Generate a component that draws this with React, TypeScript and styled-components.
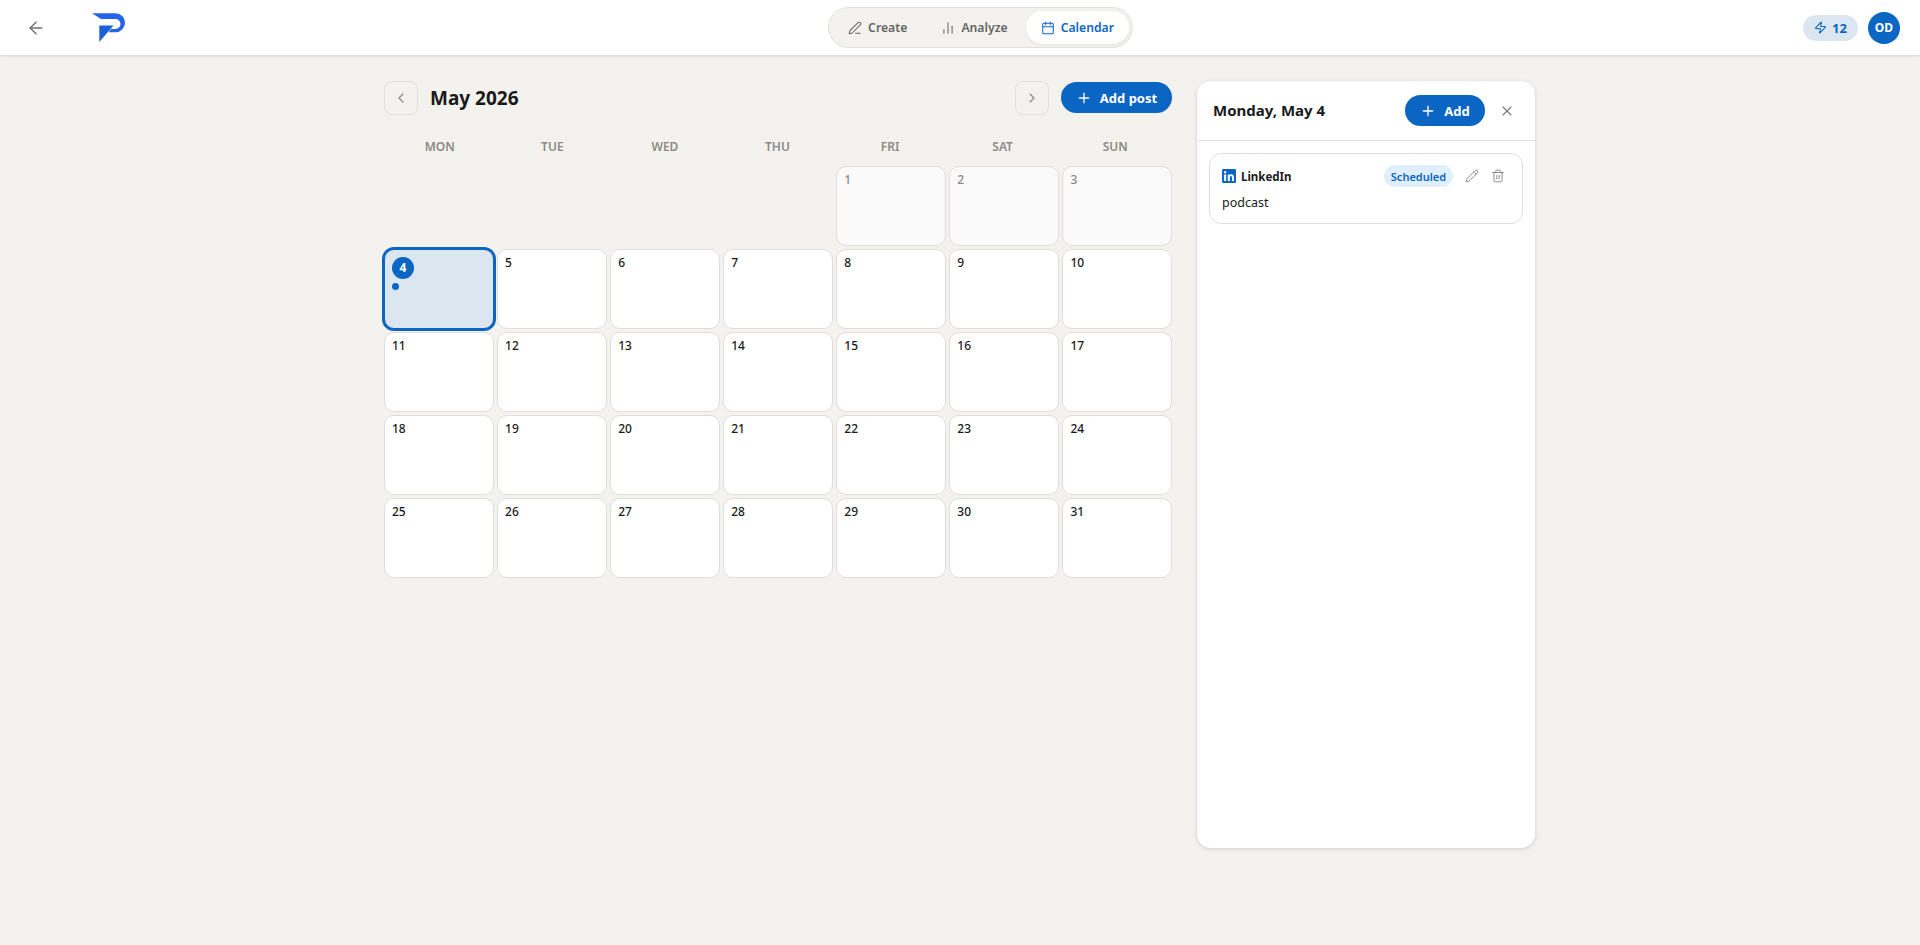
import React from "react";
import styled, { createGlobalStyle } from "styled-components";
import { ArrowLeft, PenLine, ChartNoAxesColumn, Calendar, Zap, ChevronLeft, ChevronRight, Plus, X, Pencil, Trash2 } from "lucide-react";

const Global = createGlobalStyle`
  html, body { margin: 0; padding: 0; height: 100%; background: #f3f2ee; }
  body { font-family: "Noto Sans", "Open Sans", sans-serif; color: #1a1a1a; }
  * { box-sizing: border-box; }
  button { font-family: inherit; }
`;

const Page = styled.div`
  min-height: 945px;
  background: #f3f2ee;
  display: flex;
  flex-direction: column;
`;

const TopBar = styled.header`
  height: 55px;
  background: #fff;
  box-shadow: 0 1px 3px rgba(0, 0, 0, 0.12);
  display: flex;
  align-items: center;
  justify-content: space-between;
  padding: 0 20px;
`;

const LeftGroup = styled.div`
  width: 137px;
  display: flex;
  align-items: center;
  gap: 46px;
  padding-left: 6px;
`;

const BackButton = styled.button`
  width: 20px;
  height: 20px;
  padding: 0;
  border: 0;
  background: none;
  color: #6f6f6b;
  display: flex;
  align-items: center;
  justify-content: center;
`;

const Switcher = styled.nav`
  width: 305px;
  height: 41px;
  padding: 3px 3px 3px 4px;
  border-radius: 21px;
  background: #f3f2ee;
  border: 1px solid #e2e0db;
  display: flex;
  align-items: center;
`;

const Tab = styled.button<{ $active?: boolean; $w: number }>`
  width: ${(p) => p.$w}px;
  height: 33px;
  padding: 0;
  border: 0;
  border-radius: 17px;
  background: ${(p) => (p.$active ? "#fff" : "transparent")};
  box-shadow: ${(p) => (p.$active ? "0 1px 3px rgba(0,0,0,.08)" : "none")};
  color: ${(p) => (p.$active ? "#0a66c2" : "#666662")};
  font-size: 12.2px;
  font-weight: 600;
  display: flex;
  align-items: center;
  justify-content: center;
  gap: 6px;
`;

const RightGroup = styled.div`
  display: flex;
  align-items: center;
  gap: 10px;
`;

const Credits = styled.div`
  width: 55px;
  height: 26px;
  border-radius: 13px;
  background: #dce6f1;
  color: #0a66c2;
  font-size: 13px;
  font-weight: 700;
  display: flex;
  align-items: center;
  justify-content: center;
  gap: 5px;
`;

const Avatar = styled.div`
  width: 32px;
  height: 32px;
  border-radius: 50%;
  background: #0a66c2;
  color: #fff;
  font-size: 12px;
  font-weight: 700;
  display: flex;
  align-items: center;
  justify-content: center;
`;

const Main = styled.main`
  width: 1152px;
  margin: 0 auto;
  padding-top: 25px;
  display: flex;
  align-items: flex-start;
  gap: 25px;
`;

const CalendarColumn = styled.section`
  width: 788px;
`;

const CalendarHead = styled.div`
  height: 35px;
  display: flex;
  align-items: center;
`;

const NavButton = styled.button`
  width: 34px;
  height: 34px;
  padding: 0;
  border: 1px solid #e2e0db;
  border-radius: 8px;
  background: transparent;
  color: #8a8a85;
  display: flex;
  align-items: center;
  justify-content: center;
`;

const MonthTitle = styled.h1`
  margin: 0 0 0 12px;
  font-size: 19px;
  font-weight: 700;
  color: #1a1a1a;
  flex: 1;
`;

const PrimaryButton = styled.button<{ $w: number }>`
  width: ${(p) => p.$w}px;
  height: 31px;
  padding: 0;
  border: 0;
  border-radius: 16px;
  background: #0a66c2;
  color: #fff;
  font-size: 13px;
  font-weight: 700;
  display: flex;
  align-items: center;
  justify-content: center;
  gap: 8px;
`;

const AddPost = styled(PrimaryButton)`
  margin-left: 12px;
`;

const WeekRow = styled.div`
  margin-top: 20px;
  padding: 0 2px 0 1px;
  display: grid;
  grid-template-columns: repeat(7, 1fr);
  gap: 3px;
`;

const WeekDay = styled.div`
  height: 31px;
  font-size: 12px;
  font-weight: 600;
  color: #8a8a85;
  text-align: center;
  line-height: 24px;
`;

const DayGrid = styled.div`
  display: grid;
  grid-template-columns: repeat(7, 1fr);
  grid-auto-rows: 80px;
  gap: 3px 3.5px;
`;

const Blank = styled.div``;

const Day = styled.div<{ $muted?: boolean; $selected?: boolean }>`
  border-radius: 10px;
  padding: 4px 7px;
  font-size: 12px;
  font-weight: 500;
  line-height: 18px;
  border: 1px solid ${(p) => (p.$selected ? "#0a66c2" : "#e0ded9")};
  box-shadow: ${(p) => (p.$selected ? "0 0 0 2px #0a66c2" : "none")};
  background: ${(p) => (p.$selected ? "#dce6f1" : p.$muted ? "#fafafa" : "#fff")};
  color: ${(p) => (p.$muted ? "#8a8a85" : "#1a1a1a")};
`;

const SelectedNumber = styled.div`
  width: 22px;
  height: 22px;
  margin-top: 3px;
  border-radius: 50%;
  background: #0a66c2;
  color: #fff;
  font-weight: 700;
  display: flex;
  align-items: center;
  justify-content: center;
`;

const PostDot = styled.div`
  width: 7px;
  height: 7px;
  margin-top: 4px;
  border-radius: 50%;
  background: #0a66c2;
`;

const SidePanel = styled.aside`
  width: 338px;
  height: 767px;
  margin-top: 1px;
  background: #fff;
  border-radius: 14px;
  box-shadow: 0 1px 4px rgba(0, 0, 0, 0.15);
`;

const PanelHead = styled.div`
  height: 60px;
  padding: 0 20px 0 16px;
  border-bottom: 1px solid #e2e0db;
  display: flex;
  align-items: center;
`;

const PanelTitle = styled.h2`
  margin: -2px 0 0;
  flex: 1;
  font-size: 15px;
  font-weight: 700;
  color: #1a1a1a;
`;

const CloseButton = styled.button`
  width: 16px;
  height: 16px;
  margin-left: 14px;
  padding: 0;
  border: 0;
  background: none;
  color: #7d7d78;
  display: flex;
  align-items: center;
  justify-content: center;
`;

const PanelBody = styled.div`
  padding: 12px;
`;

const PostCard = styled.article`
  height: 71px;
  padding: 11px 17px 11px 12px;
  border: 1px solid #e2e0db;
  border-radius: 12px;
`;

const PostTop = styled.div`
  height: 22px;
  display: flex;
  align-items: center;
`;

const Network = styled.div`
  flex: 1;
  display: flex;
  align-items: center;
  gap: 5px;
  font-size: 11.5px;
  font-weight: 700;
`;

const Status = styled.span`
  width: 69px;
  height: 22px;
  border-radius: 11px;
  background: #e0effe;
  color: #0a66c2;
  font-size: 11px;
  font-weight: 600;
  display: flex;
  align-items: center;
  justify-content: center;
`;

const IconAction = styled.button`
  width: 14px;
  height: 14px;
  margin-left: 12px;
  padding: 0;
  border: 0;
  background: none;
  color: #7d7d78;
  display: flex;
  align-items: center;
  justify-content: center;
`;

const PostText = styled.p`
  margin: 6px 0 0;
  font-size: 12.5px;
  line-height: 20px;
  color: #1a1a1a;
`;

const Logo = () => (
  <svg width="33" height="30" viewBox="0 0 33 30" aria-label="logo">
    <path d="M0 0.3H23.5a9.5 9.5 0 0 1 0 19H16.5l2.6-3.3H23.5a3.4 3.4 0 0 0 0-10H9z" fill="#2563eb" />
    <path d="M7.3 12.5H21.5L7.3 29z" fill="#1d5fd6" />
  </svg>
);

const LinkedInIcon = () => (
  <svg width="14" height="14" viewBox="0 0 24 24" aria-label="LinkedIn">
    <rect width="24" height="24" rx="2" fill="#0a66c2" />
    <path fill="#fff" d="M7.1 9.3H3.6V20.5h3.5zM5.4 3.6a2 2 0 1 0 0 4.1 2 2 0 0 0 0-4.1zM20.5 14.1c0-3-1.6-5-4.2-5-1.5 0-2.5.8-3 1.6V9.3H9.9V20.5h3.5v-5.6c0-1.5.5-2.8 2.1-2.8s1.6 1.5 1.6 2.9v5.5h3.4z" />
  </svg>
);

const weekDays = ["MON", "TUE", "WED", "THU", "FRI", "SAT", "SUN"];
const days = Array.from({ length: 31 }, (_, i) => i + 1);

export default function App() {
  return (
    <Page>
      <Global />
      <TopBar>
        <LeftGroup>
          <BackButton aria-label="Back"><ArrowLeft size={20} strokeWidth={1.75} /></BackButton>
          <Logo />
        </LeftGroup>
        <Switcher>
          <Tab $w={91}><PenLine size={14} strokeWidth={1.75} />Create</Tab>
          <Tab $w={104}><ChartNoAxesColumn size={14} strokeWidth={1.75} />Analyze</Tab>
          <Tab $w={103} $active><Calendar size={14} strokeWidth={1.75} />Calendar</Tab>
        </Switcher>
        <RightGroup>
          <Credits><Zap size={13} strokeWidth={2} />12</Credits>
          <Avatar>OD</Avatar>
        </RightGroup>
      </TopBar>
      <Main>
        <CalendarColumn>
          <CalendarHead>
            <NavButton aria-label="Previous"><ChevronLeft size={16} strokeWidth={1.75} /></NavButton>
            <MonthTitle>May 2026</MonthTitle>
            <NavButton aria-label="Next"><ChevronRight size={16} strokeWidth={1.75} /></NavButton>
            <AddPost $w={111}><Plus size={16} strokeWidth={2} />Add post</AddPost>
          </CalendarHead>
          <WeekRow>
            {weekDays.map((d) => <WeekDay key={d}>{d}</WeekDay>)}
          </WeekRow>
          <DayGrid>
            {[0, 1, 2, 3].map((b) => <Blank key={b} />)}
            {days.map((d) =>
              d === 4 ? (
                <Day key={d} $selected>
                  <SelectedNumber>{d}</SelectedNumber>
                  <PostDot />
                </Day>
              ) : (
                <Day key={d} $muted={d < 4}>{d}</Day>
              )
            )}
          </DayGrid>
        </CalendarColumn>
        <SidePanel>
          <PanelHead>
            <PanelTitle>Monday, May 4</PanelTitle>
            <PrimaryButton $w={80}><Plus size={16} strokeWidth={2} />Add</PrimaryButton>
            <CloseButton aria-label="Close"><X size={16} strokeWidth={1.75} /></CloseButton>
          </PanelHead>
          <PanelBody>
            <PostCard>
              <PostTop>
                <Network><LinkedInIcon />LinkedIn</Network>
                <Status>Scheduled</Status>
                <IconAction aria-label="Edit"><Pencil size={14} strokeWidth={1.5} /></IconAction>
                <IconAction aria-label="Delete"><Trash2 size={14} strokeWidth={1.5} /></IconAction>
              </PostTop>
              <PostText>podcast</PostText>
            </PostCard>
          </PanelBody>
        </SidePanel>
      </Main>
    </Page>
  );
}
